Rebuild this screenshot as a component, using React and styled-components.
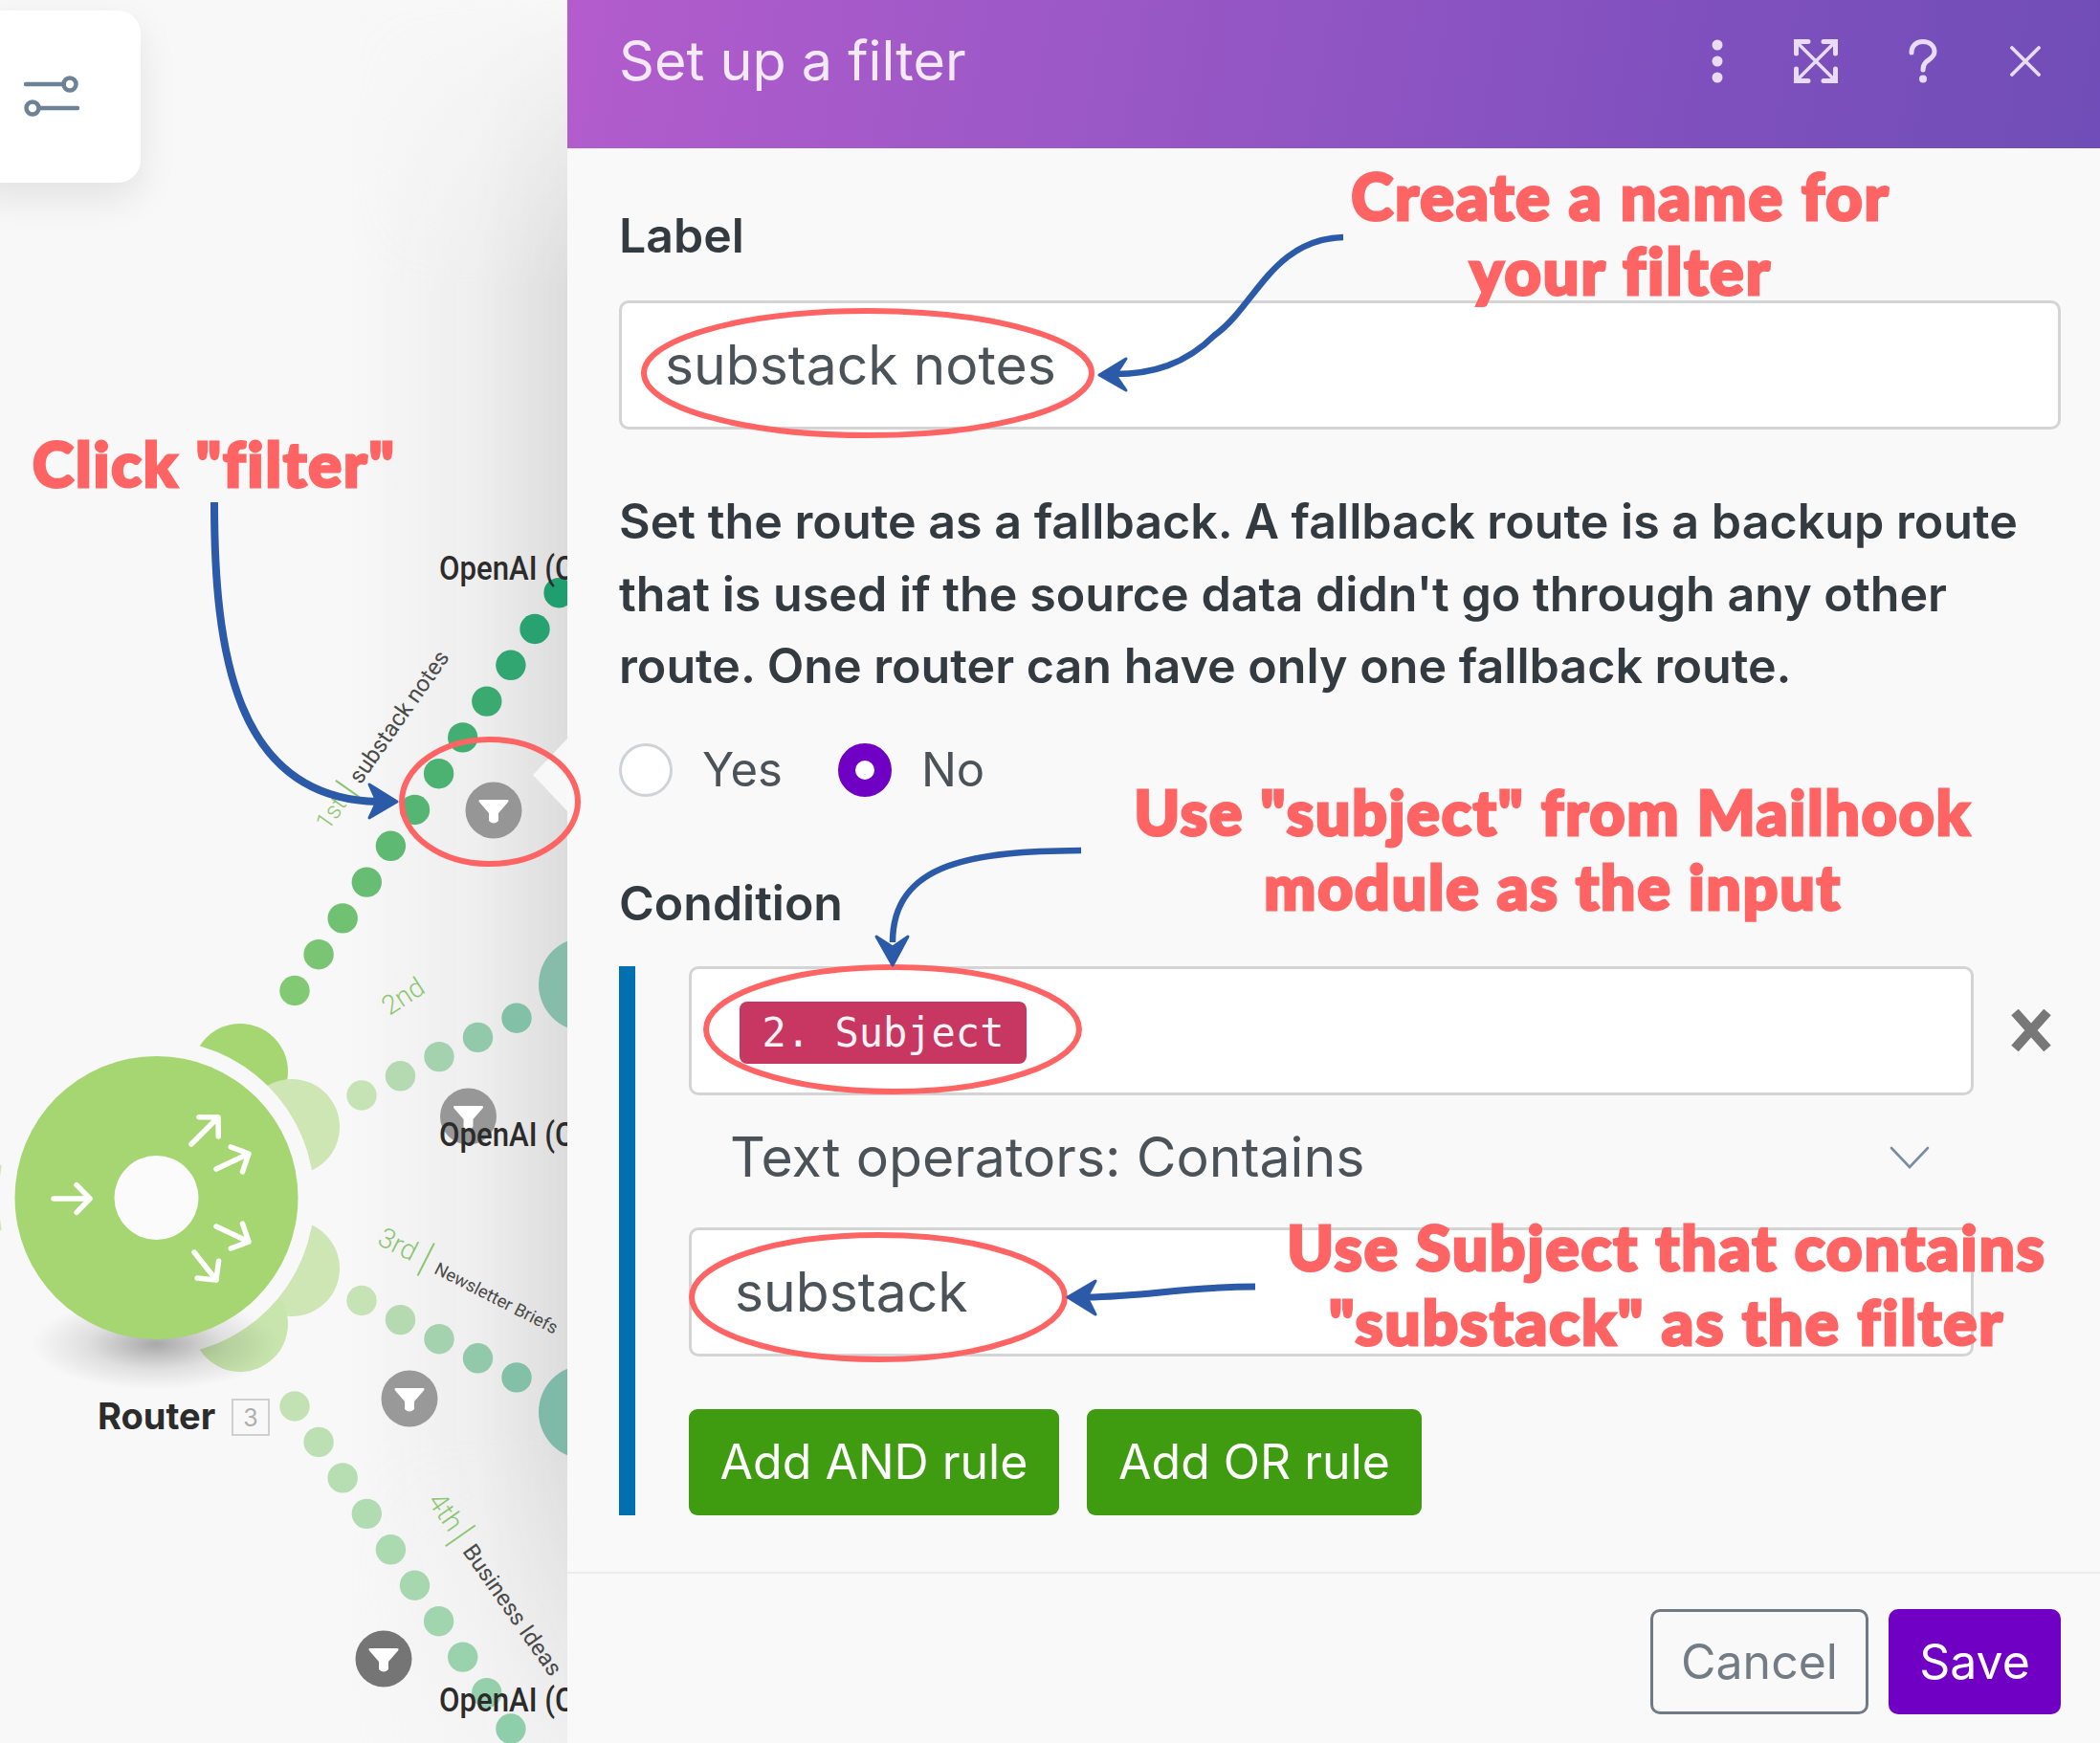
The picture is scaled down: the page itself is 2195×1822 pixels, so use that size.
import React from "react";
import styled, { createGlobalStyle } from "styled-components";

const Global = createGlobalStyle`
  html, body { margin: 0; padding: 0; background: #f9f9f9; }
  #root { width: 2195px; height: 1822px; overflow: hidden; }
  * { box-sizing: border-box; }
`;

const Page = styled.div`
  position: relative;
  display: grid;
  grid-template-columns: 593px 1fr;
  width: 2195px;
  height: 1822px;
  font-family: Inter, "Noto Sans", sans-serif;
  overflow: hidden;
`;

/* ---------- left canvas ---------- */
const Canvas = styled.section`
  position: relative;
  height: 100%;
  overflow: hidden;
  background: #f8f8f8;
  &::before {
    content: "";
    position: absolute;
    top: 0;
    bottom: 0;
    right: 0;
    width: 230px;
    background: linear-gradient(90deg, rgba(216,216,216,0) 0%, rgba(216,216,216,0.3) 60%, #dcdcdc 100%);
    -webkit-mask-image: linear-gradient(180deg, transparent 0, #000 300px, #000 1500px, rgba(0,0,0,.3) 1822px);
  }
`;

const Diagram = styled.svg`
  position: absolute;
  left: 0;
  top: 0;
  width: 593px;
  height: 1822px;
`;

const Toolbar = styled.div`
  position: absolute;
  left: -30px;
  top: 11px;
  width: 177px;
  height: 180px;
  background: #fff;
  border-radius: 24px;
  box-shadow: 0 16px 40px rgba(0, 0, 0, 0.09);
  display: flex;
  align-items: center;
  justify-content: flex-end;
  padding-right: 64px;
`;

const ModuleName = styled.text`
  font-family: Roboto, sans-serif;
  font-weight: 500;
  font-size: 35px;
  fill: #2b2b2b;
`;

const RouteOrder = styled.text`
  font-family: Roboto, sans-serif;
  font-weight: 300;
  font-size: ${(p) => p.$size || 26}px;
  fill: #8cc670;
`;

const RouteName = styled.text`
  font-family: Roboto, sans-serif;
  font-size: ${(p) => p.$size || 24}px;
  fill: #4a4a4a;
`;

const RouterName = styled.text`
  font-family: Inter, sans-serif;
  font-weight: 700;
  font-size: 38px;
  fill: #2c2c2c;
`;

const RouterCount = styled.text`
  font-family: Inter, sans-serif;
  font-size: 25px;
  fill: #aeaeae;
`;

/* ---------- right panel ---------- */
const Panel = styled.section`
  position: relative;
  display: flex;
  flex-direction: column;
  height: 100%;
  background: #f9f9f9;
`;

const Header = styled.header`
  height: 155px;
  flex: none;
  display: flex;
  align-items: center;
  padding: 0 62px 27px 54px;
  background: linear-gradient(100deg, #b35ccd 0%, #9a58c6 35%, #7e50bd 75%, #704db8 100%);
`;

const Title = styled.h1`
  margin: 0;
  flex: 1;
  font-size: 57.5px;
  font-weight: 400;
  color: #f3e9f9;
  line-height: 1;
`;

const HeaderIcons = styled.div`
  display: flex;
  align-items: center;
  svg { display: block; }
`;

const IconSlot = styled.span`
  display: flex;
  margin-left: ${(p) => p.$gap}px;
`;

const Body = styled.div`
  flex: 1;
  display: flex;
  flex-direction: column;
  padding: 61px 41px 0 54px;
`;

const FieldLabel = styled.label`
  display: block;
  margin-top: ${(p) => p.$top || 0}px;
  font-size: 50px;
  line-height: 60px;
  font-weight: 600;
  color: #333a40;
`;

const Field = styled.div`
  display: flex;
  align-items: center;
  flex: none;
  width: ${(p) => (p.$fixed ? `${p.$fixed}px` : "auto")};
  height: 135px;
  margin-top: ${(p) => p.$top || 0}px;
  padding-left: ${(p) => p.$pad || 0}px;
  background: #fff;
  border: 3px solid #d4d4d4;
  border-radius: 10px;
  font-size: 57px;
  color: #4b5258;
`;

const Paragraph = styled.p`
  margin: 58px 0 0;
  font-size: 50.2px;
  line-height: 75.6px;
  font-weight: 600;
  color: #333a40;
`;

const Radios = styled.div`
  display: flex;
  align-items: center;
  margin-top: 43px;
  height: 56px;
`;

const Radio = styled.span`
  flex: none;
  width: 56px;
  height: 56px;
  border-radius: 50%;
  background: #fff;
  border: ${(p) => (p.$on ? "18px solid #6f00c4" : "3px solid #cfd3d6")};
`;

const RadioText = styled.span`
  margin: 0 58px 0 31px;
  font-size: 49px;
  color: #4b5258;
`;

const Condition = styled.div`
  display: flex;
  height: 574px;
  margin-top: 36px;
`;

const Bar = styled.div`
  flex: none;
  width: 17px;
  background: #0070ae;
`;

const Rules = styled.div`
  flex: 1;
  margin-left: 56px;
  display: flex;
  flex-direction: column;
`;

const RuleRow = styled.div`
  display: flex;
  align-items: center;
`;

const RemoveIcon = styled.span`
  display: flex;
  margin-left: 38px;
`;

const Pill = styled.span`
  display: inline-flex;
  align-items: center;
  justify-content: center;
  width: 300px;
  height: 65px;
  margin-top: 4px;
  border-radius: 8px;
  background: #c83662;
  color: #fdf3f6;
  font-family: "DejaVu Sans Mono", "Liberation Mono", monospace;
  font-size: 42px;
`;

const Select = styled.div`
  display: flex;
  align-items: center;
  justify-content: space-between;
  height: 139px;
  padding: 0 46px 8px 43px;
  width: 1343px;
  font-size: 57.2px;
  color: #4b5258;
`;

const Buttons = styled.div`
  display: flex;
  gap: 29px;
  margin-top: 55px;
`;

const GreenButton = styled.button`
  width: ${(p) => p.$w}px;
  height: 111px;
  border: 0;
  border-radius: 9px;
  background: #3f9c10;
  color: #fff;
  font-family: Inter, sans-serif;
  font-size: 50px;
`;

const Footer = styled.footer`
  flex: none;
  display: flex;
  justify-content: flex-end;
  gap: 21px;
  height: 179px;
  padding: 37px 41px 0 0;
  border-top: 2px solid #ececec;
`;

const CancelButton = styled.button`
  width: 228px;
  height: 110px;
  border: 3px solid #6f7a85;
  border-radius: 10px;
  background: transparent;
  color: #737c85;
  font-family: Inter, sans-serif;
  font-size: 50px;
`;

const SaveButton = styled.button`
  width: 180px;
  height: 110px;
  border: 0;
  border-radius: 10px;
  background: #6f00c4;
  color: #fff;
  font-family: Inter, sans-serif;
  font-size: 50px;
`;

/* ---------- annotation layer ---------- */
const Marks = styled.svg`
  position: absolute;
  left: 0;
  top: 0;
  width: 2195px;
  height: 1822px;
  pointer-events: none;
`;

const Note = styled.div`
  position: absolute;
  left: ${(p) => p.$cx - 600}px;
  top: ${(p) => p.$y}px;
  width: 1200px;
  text-align: center;
  font-family: Lato, "Open Sans", sans-serif;
  font-weight: 900;
  font-size: ${(p) => p.$size}px;
  letter-spacing: 2px;
  line-height: 78px;
  color: #ff6464;
  -webkit-text-stroke: 3px #ff6464;
  white-space: pre;
`;

/* ---------- drawings ---------- */
const mix = (a, b, t) => {
  const ca = [1, 3, 5].map((i) => parseInt(a.slice(i, i + 2), 16));
  const cb = [1, 3, 5].map((i) => parseInt(b.slice(i, i + 2), 16));
  return `rgb(${ca.map((v, i) => Math.round(v + (cb[i] - v) * t)).join(",")})`;
};

const Route = ({ from, step, count, start, end }) => (
  <>
    {Array.from({ length: count }, (_, i) => (
      <circle
        key={i}
        cx={from[0] + step[0] * i}
        cy={from[1] + step[1] * i}
        r="15.7"
        fill={mix(start, end, i / (count - 1))}
      />
    ))}
  </>
);

const FilterBadge = ({ x, y, fill }) => (
  <g transform={`translate(${x} ${y})`}>
    <circle r="29.5" fill={fill} />
    <path
      d="M-14 -11 H14 Q16.5 -11 15 -8.5 L5 3 V11 Q0 16 -5 11 V3 L-15 -8.5 Q-16.5 -11 -14 -11 Z"
      fill="#fff"
    />
  </g>
);

const RouterArrow = ({ x1, y1, x2, y2 }) => {
  const a = Math.atan2(y2 - y1, x2 - x1);
  const L = 20;
  const hx = (d) => x2 - L * Math.cos(a + d);
  const hy = (d) => y2 - L * Math.sin(a + d);
  return (
    <path
      d={`M${x1} ${y1} L${x2} ${y2} M${hx(0.8)} ${hy(0.8)} L${x2} ${y2} L${hx(-0.8)} ${hy(-0.8)}`}
      stroke="#fff"
      strokeWidth="5.5"
      strokeLinecap="round"
      strokeLinejoin="round"
      fill="none"
    />
  );
};

const App = () => (
  <Page>
    <Global />
    <Canvas>
      <Diagram viewBox="0 0 593 1822">
        <defs>
          <radialGradient id="routerShadow">
            <stop offset="0%" stopColor="#000" stopOpacity="0.32" />
            <stop offset="55%" stopColor="#000" stopOpacity="0.1" />
            <stop offset="100%" stopColor="#000" stopOpacity="0" />
          </radialGradient>
        </defs>
        <circle cx="251" cy="1120" r="50" fill="#a5d672" />
        <circle cx="305" cy="1178" r="50" fill="#cde6b3" />
        <circle cx="305" cy="1326" r="50" fill="#cde6b3" />
        <circle cx="251" cy="1384" r="50" fill="#c9e5ae" />
        <circle cx="-36" cy="1252" r="50" fill="#cde6b3" />
        <circle cx="163.5" cy="1252" r="165" fill="#f8f8f8" />
        <ellipse cx="163" cy="1405" rx="130" ry="48" fill="url(#routerShadow)" />
        <circle cx="163.5" cy="1252" r="148" fill="#a5d672" />
        <circle cx="163.5" cy="1252" r="44" fill="#fbfbfb" />
        <RouterArrow x1="56" y1="1253" x2="94" y2="1253" />
        <RouterArrow x1="200" y1="1196" x2="228" y2="1168" />
        <RouterArrow x1="226" y1="1222" x2="260" y2="1206" />
        <RouterArrow x1="226" y1="1282" x2="260" y2="1298" />
        <RouterArrow x1="203" y1="1309" x2="226" y2="1338" />

        <path d="M593 772 L557 810 L593 848 Z" fill="#f8f8f8" />

        <Route from={[308, 1035.5]} step={[25.1, -37.8]} count={12} start="#82c973" end="#1f9e70" />
        <Route from={[378, 1145]} step={[40.5, -20.2]} count={5} start="#c6e3b5" end="#82c0a8" />
        <Route from={[378, 1359.5]} step={[40.5, 20.1]} count={5} start="#c6e3b5" end="#82c0a8" />
        <Route from={[308, 1470]} step={[25.1, 37.45]} count={10} start="#c2e2b4" end="#8fceab" />

        <circle cx="612" cy="1029" r="49" fill="#86bcaa" />
        <circle cx="612" cy="1476" r="49" fill="#7fb9a8" />

        <FilterBadge x="516" y="847" fill="#969696" />
        <FilterBadge x="489.5" y="1167" fill="#979797" />
        <FilterBadge x="428" y="1462" fill="#999999" />
        <FilterBadge x="401" y="1734" fill="#757575" />

        <g transform="translate(459 606) scale(0.89 1)"><ModuleName>OpenAI (C</ModuleName></g>
        <g transform="translate(459 1198) scale(0.89 1)"><ModuleName>OpenAI (C</ModuleName></g>
        <g transform="translate(459 1789) scale(0.89 1)"><ModuleName>OpenAI (C</ModuleName></g>

        <g transform="translate(343 869) rotate(-55)">
          <RouteOrder x="0" y="0" $size={25}>1st</RouteOrder>
          <path d="M48 -24 V6" stroke="#8cc670" strokeWidth="2" />
          <RouteName x="59" y="0" $size={24}>substack notes</RouteName>
        </g>
        <RouteOrder x="0" y="0" $size={28} transform="translate(407 1062) rotate(-33)">2nd</RouteOrder>
        <g transform="translate(393 1300) rotate(27)">
          <RouteOrder x="0" y="0" $size={29}>3rd</RouteOrder>
          <path d="M54 -28 V10" stroke="#8cc670" strokeWidth="2" />
          <RouteName x="67" y="0" $size={18.5}>Newsletter Briefs</RouteName>
        </g>
        <g transform="translate(446 1569) rotate(55)">
          <RouteOrder x="0" y="0" $size={29}>4th</RouteOrder>
          <path d="M50 -27 V11" stroke="#8cc670" strokeWidth="2" />
          <RouteName x="64" y="0" $size={24}>Business Ideas</RouteName>
        </g>

        <RouterName x="102" y="1494">Router</RouterName>
        <rect x="243" y="1463" width="38" height="37" fill="none" stroke="#cfcfcf" strokeWidth="2" />
        <RouterCount x="262" y="1491" textAnchor="middle">3</RouterCount>
      </Diagram>
      <Toolbar>
        <svg width="58" height="44" viewBox="0 0 58 44" fill="none" stroke="#6e8296" strokeWidth="4.5" strokeLinecap="round">
          <path d="M2 9 H42" />
          <circle cx="48" cy="9" r="6.5" />
          <path d="M16 34 H56" />
          <circle cx="9" cy="34" r="6.5" />
        </svg>
      </Toolbar>
    </Canvas>

    <Panel>
      <Header>
        <Title>Set up a filter</Title>
        <HeaderIcons>
          <IconSlot $gap={0}>
            <svg width="12" height="46" viewBox="0 0 12 46" fill="#e8dcf6">
              <circle cx="6" cy="6" r="5.5" />
              <circle cx="6" cy="23" r="5.5" />
              <circle cx="6" cy="40" r="5.5" />
            </svg>
          </IconSlot>
          <IconSlot $gap={74}>
            <svg width="46" height="46" viewBox="0 0 46 46" fill="none" stroke="#e8dcf6" strokeWidth="3.5" strokeLinecap="round">
              <path d="M5 5 L41 41 M41 5 L5 41" />
              <path d="M2.5 15 V2.5 H15 M31 2.5 H43.5 V15 M43.5 31 V43.5 H31 M15 43.5 H2.5 V31" strokeWidth="5" />
            </svg>
          </IconSlot>
          <IconSlot $gap={74}>
            <svg width="30" height="46" viewBox="0 0 30 46" fill="none" stroke="#e8dcf6" strokeWidth="5" strokeLinecap="round">
              <path d="M3 14 C3 6 9 2.5 15 2.5 C22 2.5 27 7 27 13 C27 19 21 21 18 24 C16 26 15 28 15 32" />
              <circle cx="15" cy="41.5" r="4" fill="#e8dcf6" stroke="none" />
            </svg>
          </IconSlot>
          <IconSlot $gap={76}>
            <svg width="32" height="32" viewBox="0 0 32 32" stroke="#e8dcf6" strokeWidth="3.8" strokeLinecap="round">
              <path d="M2 2 L30 30 M30 2 L2 30" />
            </svg>
          </IconSlot>
        </HeaderIcons>
      </Header>

      <Body>
        <FieldLabel>Label</FieldLabel>
        <Field $top={38} $pad={45}>substack notes</Field>
        <Paragraph>
          Set the route as a fallback. A fallback route is a backup route that is used if the source data didn't go through any other route. One router can have only one fallback route.
        </Paragraph>
        <Radios>
          <Radio />
          <RadioText>Yes</RadioText>
          <Radio $on />
          <RadioText>No</RadioText>
        </Radios>
        <FieldLabel $top={81}>Condition</FieldLabel>
        <Condition>
          <Bar />
          <Rules>
            <RuleRow>
              <Field $fixed={1343} $pad={50}>
                <Pill>2. Subject</Pill>
              </Field>
              <RemoveIcon>
                <svg width="44" height="44" viewBox="0 0 44 44" stroke="#787878" strokeWidth="10">
                  <path d="M5 3 L39 41 M39 3 L5 41" />
                </svg>
              </RemoveIcon>
            </RuleRow>
            <Select>
              <span>Text operators: Contains</span>
              <svg width="42" height="24" viewBox="0 0 42 24" fill="none" stroke="#7a8ea3" strokeWidth="2.6" strokeLinecap="round">
                <path d="M2 2 L21 22 L40 2" />
              </svg>
            </Select>
            <Field $fixed={1343} $pad={45}>substack</Field>
            <Buttons>
              <GreenButton $w={387}>Add AND rule</GreenButton>
              <GreenButton $w={350}>Add OR rule</GreenButton>
            </Buttons>
          </Rules>
        </Condition>
      </Body>

      <Footer>
        <CancelButton>Cancel</CancelButton>
        <SaveButton>Save</SaveButton>
      </Footer>
    </Panel>

    <Marks viewBox="0 0 2195 1822" fill="none">
      <g stroke="#ff6464" strokeWidth="6">
        <ellipse cx="907" cy="390" rx="234" ry="65" />
        <ellipse cx="512" cy="838" rx="92" ry="65" />
        <ellipse cx="933" cy="1076" rx="195" ry="65" />
        <ellipse cx="918" cy="1356" rx="195" ry="65" />
      </g>
      <g stroke="#2b5aa8" strokeLinecap="butt">
        <path d="M224 525 C224 680 245 835 395 838" strokeWidth="8" />
        <path d="M1404 248 C1330 250 1312 320 1270 350 C1240 380 1205 392 1160 391" strokeWidth="6.5" />
        <path d="M1130 889 C1020 890 933 900 933 985" strokeWidth="6.5" />
        <path d="M1312 1345 C1240 1345 1200 1355 1135 1356" strokeWidth="7" />
      </g>
      <g fill="#2b5aa8" stroke="#2b5aa8" strokeWidth="3" strokeLinejoin="round">
        <path d="M415 838 L386 820 L394 838 L386 855 Z" />
        <path d="M1149 392 L1177 375 L1166 392 L1177 408 Z" />
        <path d="M933 1009 L916 979 L933 990 L949 979 Z" />
        <path d="M1116 1356 L1145 1339 L1136 1356 L1145 1374 Z" />
      </g>
    </Marks>

    <Note $cx={224} $y={445} $size={65}>Click "filter"</Note>
    <Note $cx={1694} $y={165} $size={66.5}>{"Create a name for\nyour filter"}</Note>
    <Note $cx={1623} $y={810} $size={64}>{'Use "subject" from Mailhook\nmodule as the input'}</Note>
    <Note $cx={1742} $y={1264} $size={65.5}>{'Use Subject that contains\n"substack" as the filter'}</Note>
  </Page>
);

export default App;
